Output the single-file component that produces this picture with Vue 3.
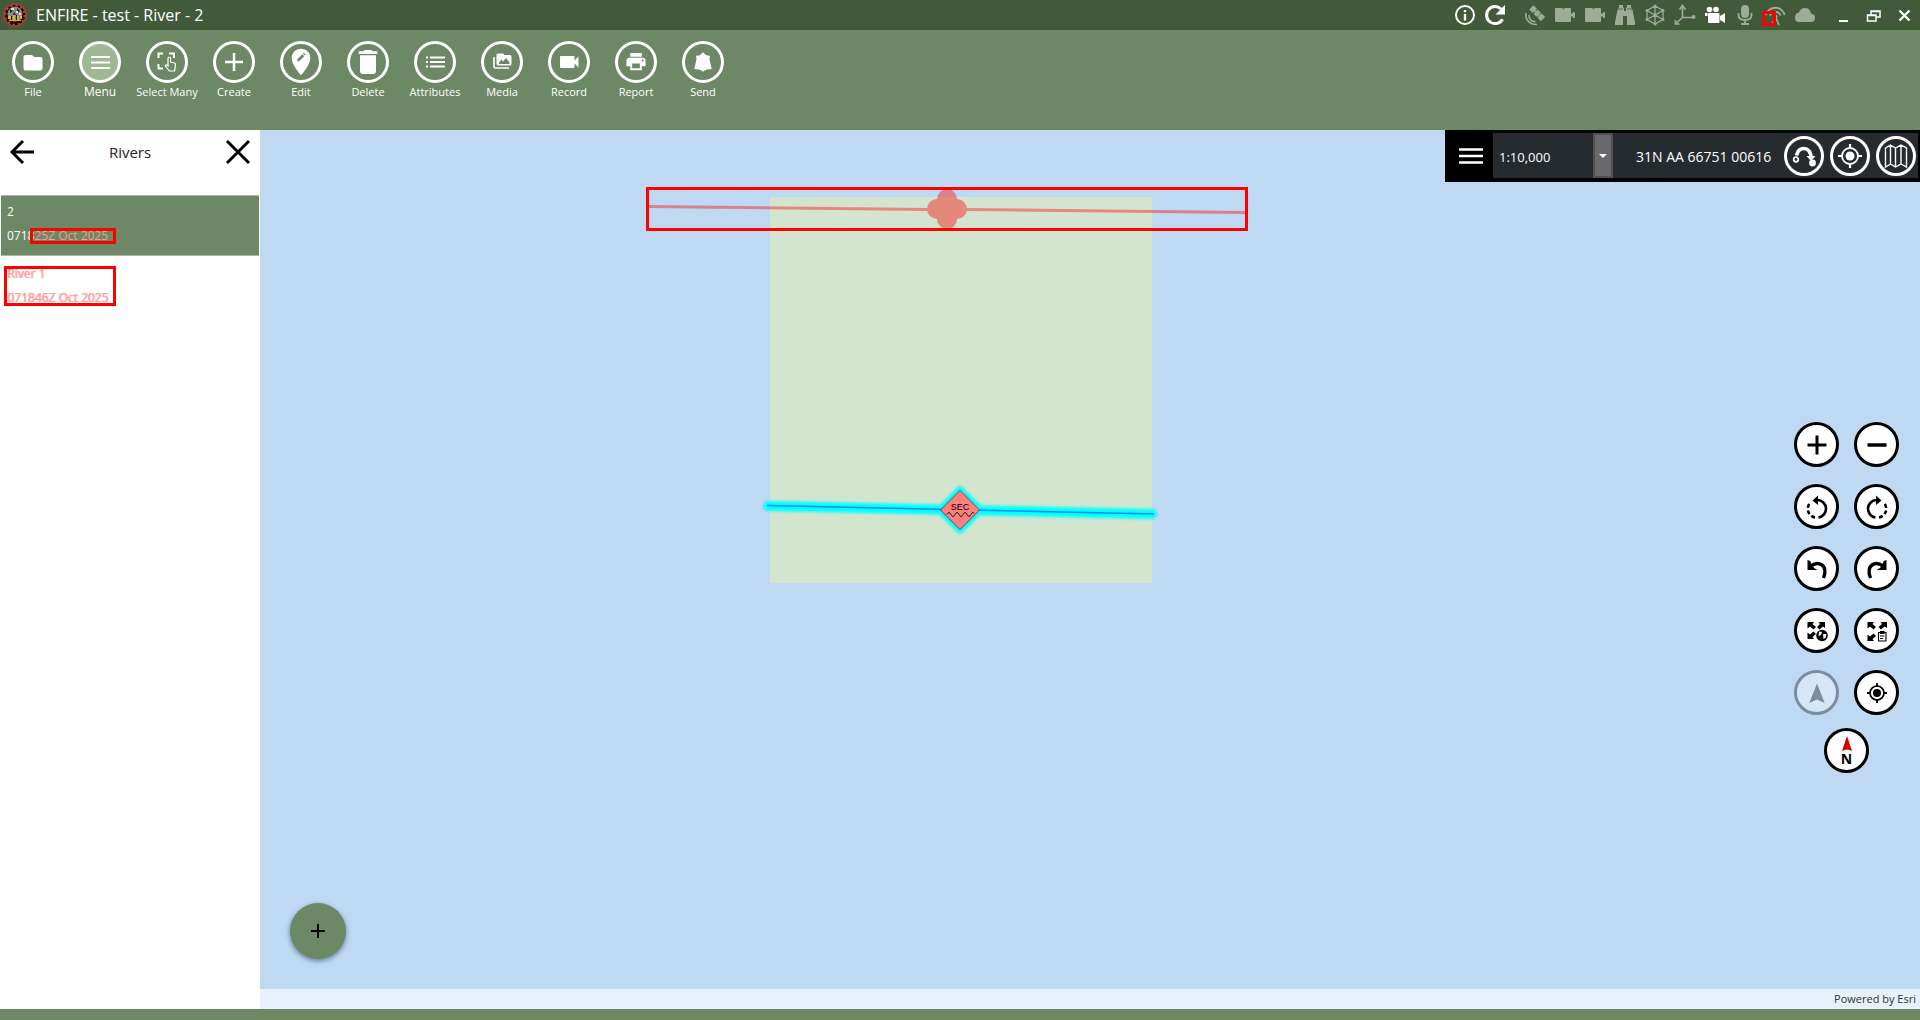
<script setup>
import { ref } from 'vue'

const icons = {
  file: '<path d="M5 5h6l2 2h6.500q2 0 2 2v9.500q0 2-2 2H4.500q-2 0-2-2V7q0-2 2-2z" fill="currentColor"/>',
  menu: '<path d="M3 7h19M3 12.500h19M3 18h19" stroke="currentColor" stroke-width="2"/>',
  select: '<g fill="none" stroke="currentColor" stroke-width="2"><path d="M3.500 8V3.500H8M14 3.500h5V8M3.500 14v4.500H8"/><path d="M13 16V8.500q0-1.500 1.300-1.500t1.300 1.500V12l4 1q1 .5.8 2l-.8 6h-5.200l-4-5q-.5-1.300.8-1.200z" fill="#6c8864" stroke-width="1.200"/></g>',
  create: '<path d="M12 3v18M3 12h18" stroke="currentColor" stroke-width="2.500"/>',
  edit: '<g transform="translate(-4 -4) scale(1.333)"><path d="M12 2C8.130 2 5 5.130 5 9c0 5.250 7 13 7 13s7-7.750 7-13c0-3.870-3.130-7-7-7z" fill="currentColor"/><path d="M9 11.500l.4-1.700 3.600-3.600 1.500 1.500-3.700 3.600zM13.500 5.700l.6-.6 1.500 1.500-.6.6z" fill="#6c8864"/></g>',
  delete: '<g transform="translate(-4 -4) scale(1.333)"><path d="M6 19c0 1.100.9 2 2 2h8c1.100 0 2-.9 2-2V7H6v12zM19 4h-3.500l-1-1h-5l-1 1H5v2h14V4z" fill="currentColor"/></g>',
  attributes: '<path d="M7 7.500h15M7 12h15M7 16.500h15M3 7.500h2M3 12h2M3 16.500h2" stroke="currentColor" stroke-width="2"/>',
  media: '<path d="M8 3.500h5l1.500 1.500H20q1.500 0 1.500 1.500V14q0 1.500-1.500 1.500H8q-1.500 0-1.500-1.500V5Q6.500 3.500 8 3.500z" fill="currentColor"/><path d="M4 7v9.500q0 1.500 1.500 1.500H19" fill="none" stroke="currentColor" stroke-width="1.600"/><path d="M9 14v-1.500l2.500-3 1.500 2 3-3.500 3.500 4.500V14z" fill="#6c8864"/>',
  record: '<path d="M4 6h12.500q1 0 1 1v3.500l4-4v11l-4-4V17q0 1-1 1H4q-1 0-1-1V7q0-1 1-1z" fill="currentColor"/>',
  report: '<g transform="translate(.5 0) scale(.96)"><path d="M19 8H5c-1.660 0-3 1.340-3 3v6h4v4h12v-4h4v-6c0-1.660-1.340-3-3-3zm-3 11H8v-5h8v5zm3-7c-.55 0-1-.45-1-1s.45-1 1-1 1 .45 1 1-.45 1-1 1zm-1-9H6v4h12V3z" fill="currentColor"/></g>',
  send: '<path d="M12 2.300l3 2.700q1.500.8 4 .6-1 3.400.2 6.800l1.500 6.600-4.700.4q-2.500.8-4 2.300-1.500-1.500-4-2.300L3.300 19l1.500-6.600Q6 9 5 5.600q2.500.2 4-.6z" fill="currentColor"/>',
  info: '<circle cx="12" cy="12" r="9" fill="none" stroke="currentColor" stroke-width="2"/><path d="M12 7v2.200M12 11v6.500" stroke="currentColor" stroke-width="2.400"/>',
  refresh: '<path d="M19.500 16.200A8.500 8.500 0 1 1 18 6" fill="none" stroke="currentColor" stroke-width="3"/><path d="M22 2v9.500h-9.500z" fill="currentColor"/>',
  satellite: '<g fill="currentColor"><g transform="rotate(45 14 10)"><rect x="6" y="7" width="5" height="6"/><rect x="12" y="7" width="4.500" height="6"/><rect x="17.500" y="7" width="5" height="6"/><rect x="9" y="9.200" width="10" height="1.600"/></g></g><path d="M3 10q-1 5 2.500 8.500T14 21.500M6 12q-.3 3 1.700 5t4.800 1.600" fill="none" stroke="currentColor" stroke-width="1.600"/>',
  plug: '<path d="M3 5h6.500l1 1.500 1-1.500H17q1 0 1 1v4.500h2V9h1q1 0 1 1v4q0 1-1 1h-1v-1.500h-2V18q0 1-1 1H3q-1 0-1-1V6q0-1 1-1z" fill="currentColor"/>',
  binoculars: '<path d="M6 2h4v2l1 1v3h2V5l1-1V2h4v2l1.500 3L22 19v3h-8v-9h-4v9H2v-3L4.500 7 6 4z" fill="currentColor"/><path d="M5 6h5M14 6h5" stroke="#425a3a" stroke-width=".8"/>',
  cube: '<path d="M12 3l8 4.500v9L12 21l-8-4.500v-9zM4 7.500l8 4.500 8-4.500M12 12v9M12 12l-8 4.500M12 12l8 4.500M12 3v9" fill="none" stroke="currentColor" stroke-width="1.300"/><g fill="currentColor"><circle cx="12" cy="3" r="1.500"/><circle cx="4" cy="7.500" r="1.500"/><circle cx="20" cy="7.500" r="1.500"/><circle cx="4" cy="16.500" r="1.500"/><circle cx="20" cy="16.500" r="1.500"/><circle cx="12" cy="21" r="1.500"/><circle cx="12" cy="12" r="1.800"/></g>',
  axis: '<path d="M9.500 4v10.500h11M9.500 14.500L3 20.500M6.500 6.500l3-4 3 4M2.500 17v4h4" fill="none" stroke="currentColor" stroke-width="1.700"/><circle cx="20.500" cy="14" r="2" fill="currentColor"/>',
  camera: '<g fill="currentColor"><circle cx="6.500" cy="6.500" r="2.800"/><circle cx="13" cy="6.500" r="2.800"/><rect x="5" y="10" width="11.500" height="10" rx="1"/><path d="M17 13l5-3v10l-5-3z"/><rect x="2" y="10" width="2.500" height="3"/></g>',
  mic: '<rect x="8" y="2" width="8" height="13" rx="4" fill="currentColor"/><path d="M5.500 10v2q0 5 6.500 5t6.500-5v-2M12 17v4M8 21h8" fill="none" stroke="currentColor" stroke-width="1.800"/>',
  signal: '<path d="M3 12A9.500 9.500 0 0 1 21.500 12M7 12.500A5.600 5.600 0 0 1 17.500 12.500" fill="none" stroke="currentColor" stroke-width="2"/><circle cx="12.500" cy="13.500" r="2" fill="currentColor"/><path d="M9 22l3.500-8 3.500 8" fill="none" stroke="currentColor" stroke-width="1.800"/>',
  cloud: '<path d="M18 10.500Q17 5 12 5T6 9.500Q2 10 2 14.500 2 19 6 19h12q4 0 4-4.200 0-4-4-4.300z" fill="currentColor"/>',
  minimize: '<path d="M8 18h9" stroke="currentColor" stroke-width="2"/>',
  restore: '<path d="M9 12V8h9v6h-4M5.500 12h8.500v6H5.500zM5 12.500h9M9 8.500h9" fill="none" stroke="currentColor" stroke-width="1.500"/>',
  close: '<path d="M6.500 7.500l10 10M16.500 7.500l-10 10" stroke="currentColor" stroke-width="2.400"/>',
  back: '<path d="M24 12H2M13 1L2 12l11 11" fill="none" stroke="currentColor" stroke-width="3"/>',
  dismiss: '<path d="M1 1l22 22M23 1L1 23" stroke="currentColor" stroke-width="3"/>',
  route: '<path d="M4.500 11.500Q6 4.500 12 4.500T19.500 14" fill="none" stroke="currentColor" stroke-width="3.600"/><circle cx="4" cy="15.500" r="2.300" fill="none" stroke="currentColor" stroke-width="1.700"/><circle cx="20.500" cy="19" r="3.400" fill="currentColor"/><path d="M14.500 12h9l-4.500 5z" fill="currentColor"/>',
  locate: '<circle cx="12" cy="12" r="8" fill="none" stroke="currentColor" stroke-width="1.800"/><circle cx="12" cy="12" r="4.500" fill="currentColor"/><path d="M12 0v5M12 19v5M0 12h5M19 12h5" stroke="currentColor" stroke-width="2.200"/>',
  map: '<path d="M1.500 4l5-3 5 3 5.500-3 5.500 3v19l-5.500-3-5.500 3-5-3-5 3zM6.500 1v19M11.500 4v19M17 1v19" fill="none" stroke="currentColor" stroke-width="1.400"/>',
  minus: '<path d="M2.500 12h19" stroke="currentColor" stroke-width="3.500"/>',
  plus: '<path d="M2.500 12h19M12 2.500v19" stroke="currentColor" stroke-width="3"/>',
  rotateLeft: '<path d="M12.500 5A8.800 8.800 0 0 1 13.500 22.500" fill="none" stroke="currentColor" stroke-width="2.600"/><path d="M10 22.500A8.800 8.800 0 0 1 5.500 7.500" fill="none" stroke="currentColor" stroke-width="2.600" stroke-dasharray="4 2.500"/><path d="M7.500 5.500L13 .5V10z" fill="currentColor"/>',
  rotateRight: '<g transform="translate(24 0) scale(-1 1)"><path d="M12.500 5A8.800 8.800 0 0 1 13.500 22.500" fill="none" stroke="currentColor" stroke-width="2.600"/><path d="M10 22.500A8.800 8.800 0 0 1 5.500 7.500" fill="none" stroke="currentColor" stroke-width="2.600" stroke-dasharray="4 2.500"/><path d="M7.500 5.500L13 .5V10z" fill="currentColor"/></g>',
  undo: '<path d="M6 9Q12 4.500 17 8t1.500 13" fill="none" stroke="currentColor" stroke-width="3.400"/><path d="M2.500 3v10h10L9 11l-4-7z" fill="currentColor"/>',
  redo: '<g transform="translate(24 0) scale(-1 1)"><path d="M6 9Q12 4.500 17 8t1.500 13" fill="none" stroke="currentColor" stroke-width="3.400"/><path d="M2.500 3v10h10L9 11l-4-7z" fill="currentColor"/></g>',
  extentGlobe: '<g fill="currentColor"><path d="M2.500 3H9L7.500 5l3.500 3-2.500 2.500-3.500-3-2.500 2z"/><path d="M20 3h-6.500L15 5l-3 3 2.500 2.500 3.500-3L20 9z"/><path d="M2.500 20H9l-1.500-2 3.500-3-2.500-2.500-3.500 3-2.500-2z"/><circle cx="17" cy="16.500" r="5.800"/></g><path d="M14 12.500l3 .5-1 3-2.500 1zM18 15l3.500 0-1 4-2 1z" fill="#fff"/>',
  extentList: '<g fill="currentColor"><path d="M2.500 3H9L7.500 5l3.500 3-2.500 2.500-3.500-3-2.500 2z"/><path d="M22 3h-6.500L17 5l-3.500 3 2.500 2.500 3.500-3L22 9z"/><path d="M2.500 22H9l-1.500-2 3.500-3-2.500-2.500-3.500 3-2.500-2z"/></g><path d="M13.500 13.500h7.500v8.500h-7.500zM15.500 12.500h3.500v2h-3.500zM15 17h4.500M15 19.500h3" fill="none" stroke="currentColor" stroke-width="1.100"/>',
  north: '<path d="M12 2.500L19.700 22 12 18.500 4.300 22z" fill="currentColor"/>',
  locateSmall: '<circle cx="12" cy="12" r="7" fill="none" stroke="currentColor" stroke-width="1.700"/><circle cx="12" cy="12" r="4" fill="currentColor"/><path d="M12 2v4M12 18v4M2 12h4M18 12h4" stroke="currentColor" stroke-width="1.800"/>',
}

const tray = [
  ['satellite', 'GPS'], ['plug', 'Device 1'], ['plug', 'Device 2'], ['binoculars', 'Rangefinder'],
  ['cube', 'Model'], ['axis', 'Orientation'], ['camera', 'Camera'], ['mic', 'Microphone'],
  ['signal', 'Network'], ['cloud', 'Cloud'],
]

const actions = [
  ['file', 'File'], ['menu', 'Menu'], ['select', 'Select Many'], ['create', 'Create'],
  ['edit', 'Edit'], ['delete', 'Delete'], ['attributes', 'Attributes'], ['media', 'Media'],
  ['record', 'Record'], ['report', 'Report'], ['send', 'Send'],
]

const mapTools = [
  ['plus', 'Zoom in'], ['minus', 'Zoom out'], ['rotateLeft', 'Rotate left'], ['rotateRight', 'Rotate right'],
  ['undo', 'Previous extent'], ['redo', 'Next extent'], ['extentGlobe', 'Full extent'],
  ['extentList', 'Project extent'], ['north', 'Follow heading'], ['locateSmall', 'My location'],
]

const scale = ref('1:10,000')
</script>

<template>
  <div class="window">
    <header class="titlebar">
      <svg class="logo" viewBox="0 0 24 24" aria-hidden="true">
        <circle cx="12" cy="12" r="11" fill="#160d0b" stroke="#b63a34" stroke-width="1.500" />
        <circle cx="12" cy="12" r="9.500" fill="none" stroke="#d8483e" stroke-width="1.500" stroke-dasharray="2 3" />
        <circle cx="12" cy="11" r="7.500" fill="#8f8a83" />
        <path d="M7 6l3 2-3 2zM14 5l3 3-3 2zM11 9l2 3h-3z" fill="#2b2222" />
        <path d="M8 5h3v2H8zM13 8h2v2h-2zM16 10h2v2h-2z" fill="#dedbd5" />
        <path d="M5 13h3v3H5zM10 12h2v5h-2zM14 13h2v4h-2zM17 13h2v3h-2zM6 17h12v1H6z" fill="#d8b52b" />
        <path d="M8 13h1v4H8zM13 12h1v5h-1z" fill="#1c1512" />
      </svg>
      <h1 class="title">ENFIRE - test - River - 2</h1>
      <div class="tray-main">
        <button class="tray-button" aria-label="Information"><svg class="icon" viewBox="0 0 24 24" v-html="icons.info" /></button>
        <button class="tray-button" aria-label="Refresh"><svg class="icon" viewBox="0 0 24 24" v-html="icons.refresh" /></button>
      </div>
      <div class="tray">
        <button
          v-for="([icon, label], i) in tray"
          :key="i"
          class="tray-button"
          :class="{ dim: icon !== 'camera' }"
          :aria-label="label"
        >
          <svg class="icon" viewBox="0 0 24 24" v-html="icons[icon]" />
          <span v-if="icon === 'signal'" class="mark mark-signal"></span>
        </button>
      </div>
      <div class="window-controls">
        <button class="tray-button" aria-label="Minimize"><svg class="icon" viewBox="0 0 24 24" v-html="icons.minimize" /></button>
        <button class="tray-button" aria-label="Restore"><svg class="icon" viewBox="0 0 24 24" v-html="icons.restore" /></button>
        <button class="tray-button" aria-label="Close"><svg class="icon" viewBox="0 0 24 24" v-html="icons.close" /></button>
      </div>
    </header>

    <nav class="ribbon">
      <button v-for="[icon, label] in actions" :key="icon" class="action" :class="{ active: icon === 'menu' }">
        <span class="ring"><svg class="icon" viewBox="0 0 24 24" v-html="icons[icon]" /></span>
        <span>{{ label }}</span>
      </button>
    </nav>

    <main class="workspace">
      <aside class="panel">
        <div class="panel-head">
          <button class="plain" aria-label="Back"><svg class="icon" viewBox="0 0 24 24" v-html="icons.back" /></button>
          <h2 class="panel-title">Rivers</h2>
          <button class="plain" aria-label="Close panel"><svg class="icon" viewBox="0 0 24 24" v-html="icons.dismiss" /></button>
        </div>
        <ul class="list">
          <li class="item selected">
            <span>2</span>
            <span>0718<span class="flagged">25Z Oct 2025</span></span>
            <span class="mark mark-date"></span>
          </li>
          <li class="item struck">
            <span>River 1</span>
            <span>071846Z Oct 2025</span>
            <span class="mark mark-item"></span>
          </li>
        </ul>
      </aside>

      <section class="map" aria-label="Map">
        <div class="canvas">
          <svg class="features" width="1660" height="859" viewBox="260 130 1660 859">
            <defs>
              <filter id="glow" x="-10%" y="-60%" width="120%" height="220%">
                <feGaussianBlur stdDeviation="1.500" />
              </filter>
            </defs>
            <rect x="770" y="197" width="382" height="386" fill="#d3e5cf" />
            <g fill="#ff0000" stroke="#ff0000" opacity="0.400">
              <path d="M648 206.500L928 209.500M966 209.500L1246 212.500" stroke-width="3" />
              <path
                d="M937 199A10 10 0 0 1 957 199A10 10 0 0 1 957 219A10 10 0 0 1 937 219A10 10 0 0 1 937 199z"
                stroke="none"
              />
            </g>
            <rect x="647.500" y="188.500" width="599" height="41" fill="none" stroke="#ff0000" stroke-width="3" />
            <g filter="url(#glow)" stroke="#00ffff" fill="#00ffff" stroke-linecap="round" stroke-linejoin="round">
              <path d="M768 506L960 510L1152 514" fill="none" stroke-width="10" />
              <path d="M960 490.500L979.500 510L960 529.500L940.500 510z" stroke-width="8" />
            </g>
            <path d="M767 505.500L1154 514" stroke="#008cff" stroke-width="1.600" />
            <path d="M960 490.500L979.500 510L960 529.500L940.500 510z" fill="#ff7f7f" stroke="#6b4a48" />
            <text x="960" y="510" text-anchor="middle" font-size="9" fill="#000">SEC</text>
            <path d="M947 514.500q2-4 4 0t4 0 4 0 4 0 4 0 4 0 3-1" fill="none" stroke="#222" />
          </svg>

          <div class="coordbar">
            <button class="burger" aria-label="Map menu"><svg class="icon" viewBox="0 0 24 24"><path d="M0 5.500h24M0 12h24M0 18.500h24" stroke="currentColor" stroke-width="2.500" /></svg></button>
            <div class="scale">
              <select v-model="scale" aria-label="Map scale">
                <option>1:10,000</option>
                <option>1:25,000</option>
                <option>1:50,000</option>
              </select>
              <span class="drop"></span>
            </div>
            <output class="coords">31N AA 66751 00616</output>
            <button class="round-dark" aria-label="Route"><svg class="icon" viewBox="0 0 24 24" v-html="icons.route" /></button>
            <button class="round-dark" aria-label="Locate"><svg class="icon" viewBox="0 0 24 24" v-html="icons.locate" /></button>
            <button class="round-dark" aria-label="Basemap"><svg class="icon" viewBox="0 0 24 24" v-html="icons.map" /></button>
          </div>

          <div class="tools">
            <div class="tool-grid">
              <button
                v-for="[icon, label] in mapTools"
                :key="icon"
                class="tool"
                :disabled="icon === 'north'"
                :aria-label="label"
              >
                <svg class="icon" viewBox="0 0 24 24" v-html="icons[icon]" />
              </button>
            </div>
            <button class="tool compass" aria-label="Reset to north">
              <svg viewBox="0 0 12 16"><path d="M6 0l5 15q-5-3-10 0z" fill="#d40000" /></svg>
              <span>N</span>
            </button>
          </div>

          <button class="fab" aria-label="Add"><svg viewBox="0 0 14 14"><path d="M7 0v14M0 7h14" stroke="currentColor" stroke-width="2" /></svg></button>
        </div>
        <div class="attribution">Powered by Esri</div>
      </section>
    </main>
    <footer class="statusbar"></footer>
  </div>
</template>

<style>
body {
  margin: 0;
}
</style>

<style scoped>
.window {
  display: flex;
  flex-direction: column;
  min-height: 100vh;
  background: #6c8864;
  font-family: "Open Sans", "Noto Sans", sans-serif;
  font-size: 13px;
}

button {
  padding: 0;
  border: 0;
  background: none;
  color: inherit;
  font: inherit;
  display: flex;
  align-items: center;
  justify-content: center;
}

.icon {
  width: 24px;
  height: 24px;
  flex: none;
  overflow: visible;
}

.titlebar {
  display: flex;
  align-items: center;
  height: 30px;
  padding-left: 3px;
  background: #425a3a;
  color: #fff;
}

.logo {
  width: 24px;
  height: 24px;
}

.title {
  flex: 1;
  margin: 0 0 0 9px;
  font-size: 16px;
  line-height: 30px;
  font-weight: 400;
}

.tray-main,
.tray,
.window-controls {
  display: flex;
}

.tray-main {
  margin-right: 10px;
}

.window-controls {
  margin-left: 7px;
}

.tray-button {
  position: relative;
  width: 30px;
  height: 30px;
}

.window-controls .tray-button {
  width: 31px;
}

.dim .icon {
  color: #9dab98;
}

.mark {
  position: absolute;
  box-sizing: border-box;
  border: 3px solid #f00;
}

.mark-signal {
  left: 2px;
  top: 11px;
  width: 14px;
  height: 15px;
}

.ribbon {
  display: flex;
  gap: 1px;
  box-sizing: border-box;
  height: 100px;
  padding-top: 11px;
  color: #fff;
}

.action {
  flex-direction: column;
  justify-content: flex-start;
  width: 66px;
  font-size: 11px;
  line-height: 18px;
  white-space: nowrap;
}

.action.active {
  font-size: 12px;
}

.ring {
  box-sizing: border-box;
  display: flex;
  align-items: center;
  justify-content: center;
  width: 42px;
  height: 42px;
  border: 3px solid #fff;
  border-radius: 50%;
}

.active .ring {
  background: #9eb894;
}

.workspace {
  flex: 1;
  display: flex;
}

.panel {
  flex: none;
  width: 260px;
  background: #fff;
}

.panel-head {
  display: flex;
  align-items: center;
  justify-content: space-between;
  height: 44px;
  padding: 0 10px 21px;
}

.panel-title {
  margin: 0;
  font-size: 15px;
  line-height: 24px;
  font-weight: 400;
  color: #222;
}

.list {
  display: flex;
  flex-direction: column;
  gap: 1px;
  margin: 0;
  padding: 0 1px;
  list-style: none;
}

.item {
  position: relative;
  box-sizing: border-box;
  display: flex;
  flex-direction: column;
  height: 61px;
  padding: 5px 6px;
  font-size: 12px;
  line-height: 24px;
}

.selected {
  padding-top: 4px;
  background: #6c8864;
  color: #fff;
  border-top: 1px solid #a9b9a4;
  border-bottom: 1px solid #a9b9a4;
}

.flagged {
  color: #f0a090;
}

.struck {
  color: #ff9f9f;
  text-shadow: 1px 0 #ff9f9f;
}

.mark-date {
  left: 29px;
  top: 32px;
  width: 86px;
  height: 16px;
}

.mark-item {
  left: 3px;
  top: 9px;
  width: 112px;
  height: 40px;
}

.map {
  flex: 1;
  min-width: 0;
  display: flex;
  flex-direction: column;
}

.canvas {
  flex: 1;
  position: relative;
  overflow: hidden;
  min-height: 660px;
  background: #bfd9f2;
}

.features {
  position: absolute;
  left: 0;
  top: 0;
  font-family: "Liberation Sans", sans-serif;
}

.coordbar {
  position: absolute;
  top: 0;
  right: 0;
  display: flex;
  align-items: center;
  height: 45px;
  padding-right: 2px;
  border: 4px solid #000;
  border-width: 3px 2px 4px 4px;
  background: #262b2f;
  color: #fff;
}

.burger {
  width: 44px;
  height: 45px;
  background: #000;
}

.scale {
  position: relative;
  width: 120px;
  height: 45px;
}

.scale select {
  appearance: none;
  width: 100%;
  height: 100%;
  padding: 2px 26px 0 6px;
  border: 0;
  background: #262b2f;
  color: #fff;
  font: inherit;
}

.drop {
  position: absolute;
  top: 0;
  right: 0;
  box-sizing: border-box;
  display: flex;
  align-items: center;
  justify-content: center;
  width: 20px;
  height: 45px;
  border: 2px solid #505153;
  background: #69696b;
  pointer-events: none;
}

.drop::after {
  content: "";
  border: 4px solid transparent;
  border-top-color: #fff;
  border-bottom: 0;
}

.coords {
  width: 148px;
  padding: 2px 0 0 23px;
  font-size: 14px;
  white-space: nowrap;
}

.round-dark {
  box-sizing: border-box;
  width: 40px;
  height: 40px;
  border: 3px solid #fff;
  border-radius: 50%;
}

.round-dark + .round-dark {
  margin-left: 6px;
}

.tools {
  position: absolute;
  top: 292px;
  right: 21px;
  display: flex;
  flex-direction: column;
  align-items: center;
  gap: 13px;
}

.tool-grid {
  display: grid;
  grid-template-columns: auto auto;
  gap: 17px 15px;
}

.tool {
  box-sizing: border-box;
  width: 45px;
  height: 45px;
  border: 3px solid #000;
  border-radius: 50%;
  background: #fff;
  color: #000;
}

.tool:disabled {
  opacity: 0.35;
}

.compass {
  flex-direction: column;
  font-size: 14px;
  font-weight: 700;
  line-height: 14px;
}

.compass svg {
  width: 12px;
  height: 16px;
}

.fab {
  position: absolute;
  left: 30px;
  bottom: 30px;
  width: 56px;
  height: 56px;
  border-radius: 50%;
  background: #6c8864;
  box-shadow: 0 2px 5px rgba(40, 60, 90, 0.6);
  color: #000;
}

.fab svg {
  width: 14px;
  height: 14px;
}

.attribution {
  height: 20px;
  padding-right: 4px;
  background: #e8f0fb;
  color: #333;
  font-size: 11px;
  line-height: 20px;
  text-align: right;
}

.statusbar {
  height: 11px;
}
</style>
